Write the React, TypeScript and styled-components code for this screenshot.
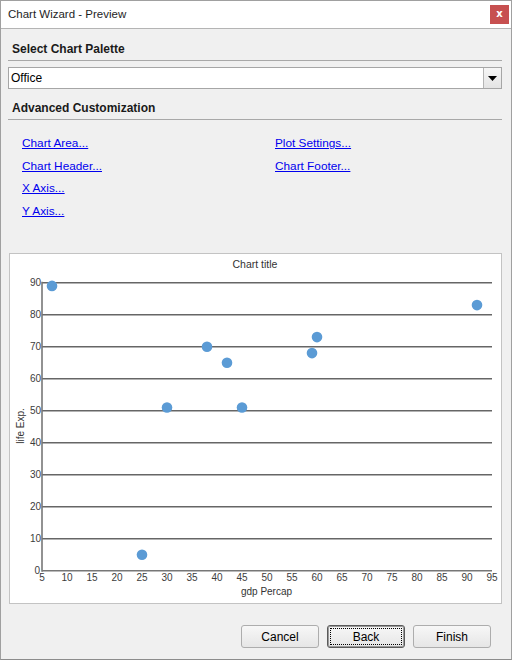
import React from 'react';
import styled, { createGlobalStyle } from 'styled-components';

const GlobalStyle = createGlobalStyle`
  html, body {
    margin: 0;
    padding: 0;
    background: #f0f0f0;
  }
  * {
    box-sizing: border-box;
  }
`;

const links: [string, string?][] = [
  ['Chart Area...', 'Plot Settings...'],
  ['Chart Header...', 'Chart Footer...'],
  ['X Axis...'],
  ['Y Axis...'],
];

const points = [
  { gdp: 7, life: 89 },
  { gdp: 25, life: 5 },
  { gdp: 30, life: 51 },
  { gdp: 38, life: 70 },
  { gdp: 42, life: 65 },
  { gdp: 45, life: 51 },
  { gdp: 59, life: 68 },
  { gdp: 60, life: 73 },
  { gdp: 92, life: 83 },
];

// plot coordinates, in page pixels
const plotLeft = 42;
const plotRight = 492;
const plotBottom = 570.7;
const xOf = (v: number) => plotLeft + (v - 5) * 5;
const yOf = (v: number) => plotBottom - v * 3.2;

const yTicks = [0, 10, 20, 30, 40, 50, 60, 70, 80, 90];
const xTicks = Array.from({ length: 19 }, (_, i) => 5 + i * 5);

const App: React.FC = () => {
  return (
    <>
      <GlobalStyle />
      <StyledWindow>
        <StyledTitleBar>
          <StyledTitle>Chart Wizard - Preview</StyledTitle>
          <StyledClose>x</StyledClose>
        </StyledTitleBar>
        <StyledBody>
          <StyledSectionHeader>Select Chart Palette</StyledSectionHeader>
          <StyledSelect>
            <StyledSelectValue>Office</StyledSelectValue>
            <StyledSelectArrow>
              <svg width="9" height="5" viewBox="0 0 9 5">
                <path d="M0 0 H9 L4.5 5 Z" fill="#000" />
              </svg>
            </StyledSelectArrow>
          </StyledSelect>
          <StyledSectionHeader $gap={12}>Advanced Customization</StyledSectionHeader>
          <StyledLinkGrid>
            {links.map(([a, b]) => (
              <React.Fragment key={a}>
                <StyledLink href="#">{a}</StyledLink>
                {b ? <StyledLink href="#">{b}</StyledLink> : <span />}
              </React.Fragment>
            ))}
          </StyledLinkGrid>
          <StyledChartPanel>
            <svg width="491" height="349" viewBox="10 254 491 349">
              <text x="255" y="268" textAnchor="middle" fontSize="10.5" fill="#333">
                Chart title
              </text>
              {yTicks.map((t) => (
                <React.Fragment key={t}>
                  {t > 0 && (
                    <line
                      x1={plotLeft}
                      x2={plotRight}
                      y1={yOf(t)}
                      y2={yOf(t)}
                      stroke="#666"
                      strokeWidth="1.6"
                    />
                  )}
                  <text
                    x={t === 0 ? 40 : 41}
                    y={yOf(t) + 3.5}
                    textAnchor="end"
                    fontSize="10"
                    fill="#3c3c3c"
                  >
                    {t}
                  </text>
                </React.Fragment>
              ))}
              <line x1={plotLeft} x2={plotLeft} y1={yOf(90) - 1} y2={plotBottom + 1} stroke="#777" strokeWidth="1.6" />
              <line x1={plotLeft} x2={plotRight} y1={plotBottom} y2={plotBottom} stroke="#777" strokeWidth="1.6" />
              {xTicks.map((t) => (
                <text key={t} x={xOf(t)} y="581" textAnchor="middle" fontSize="10" fill="#3c3c3c">
                  {t}
                </text>
              ))}
              <text x="266.5" y="595" textAnchor="middle" fontSize="10" fill="#333">
                gdp Percap
              </text>
              <text
                transform="translate(23.5 426) rotate(-90)"
                textAnchor="middle"
                fontSize="10"
                fill="#333"
              >
                life Exp.
              </text>
              {points.map((p) => (
                <circle key={`${p.gdp}-${p.life}`} cx={xOf(p.gdp)} cy={yOf(p.life)} r="5.3" fill="#5b9bd5" />
              ))}
            </svg>
          </StyledChartPanel>
          <StyledFooter>
            <StyledButton>Cancel</StyledButton>
            <StyledButton $primary>Back</StyledButton>
            <StyledButton>Finish</StyledButton>
          </StyledFooter>
        </StyledBody>
      </StyledWindow>
    </>
  );
};

const StyledWindow = styled.div`
  width: 512px;
  height: 660px;
  border: 1px solid #a0a0a0;
  border-bottom-color: #8c8c8c;
  background: #f0f0f0;
  display: flex;
  flex-direction: column;
  font-family: 'Liberation Sans', Arial, sans-serif;
  color: #000;
`;

const StyledTitleBar = styled.div`
  height: 28px;
  flex: none;
  background: #fff;
  border-bottom: 1px solid #b4b4b4;
  display: flex;
  align-items: center;
  justify-content: space-between;
  padding: 0 2px 1px 7px;
`;

const StyledTitle = styled.div`
  font-size: 11.5px;
  color: #1e1e1e;
`;

const StyledClose = styled.div`
  width: 19px;
  height: 19px;
  background: #c75050;
  color: #fff;
  font-family: 'DejaVu Sans', sans-serif;
  font-weight: bold;
  font-size: 10px;
  line-height: 17px;
  text-align: center;
`;

const StyledBody = styled.div`
  flex: 1;
  display: flex;
  flex-direction: column;
  padding: 0 9px 0 7px;
`;

const StyledSectionHeader = styled.div<{ $gap?: number }>`
  margin-top: ${(p) => p.$gap ?? 13}px;
  padding: 0 0 3px 4px;
  font-size: 12px;
  font-weight: bold;
  line-height: 15px;
  color: #1a1a1a;
  border-bottom: 1px solid #a8a8a8;
`;

const StyledSelect = styled.div`
  margin-top: 6px;
  height: 22px;
  display: flex;
  background: #fff;
  border: 1px solid #a6a6a6;
`;

const StyledSelectValue = styled.div`
  flex: 1;
  display: flex;
  align-items: center;
  padding-left: 2px;
  font-size: 12px;
`;

const StyledSelectArrow = styled.div`
  width: 18px;
  display: flex;
  align-items: center;
  justify-content: center;
  border-left: 1px solid #b5b5b5;
  background: linear-gradient(#f6f6f6, #e4e4e4);
  svg {
    margin-top: 1px;
  }
`;

const StyledLinkGrid = styled.div`
  display: grid;
  grid-template-columns: 253px 1fr;
  grid-auto-rows: 22.6px;
  padding: 16px 0 0 14px;
`;

const StyledLink = styled.a`
  font-size: 11.8px;
  line-height: 14px;
  color: #0000ee;
  text-decoration: underline;
  justify-self: start;
`;

const StyledChartPanel = styled.div`
  margin: 27px 0 0 1px;
  width: 493px;
  height: 351px;
  background: #fff;
  border: 1px solid #c3c3c3;
  svg {
    display: block;
    font-family: 'Liberation Sans', Arial, sans-serif;
  }
`;

const StyledFooter = styled.div`
  display: flex;
  justify-content: flex-end;
  gap: 8px;
  margin-top: 21px;
  padding-right: 11px;
`;

const StyledButton = styled.button<{ $primary?: boolean }>`
  width: 78px;
  height: 23px;
  padding: 0;
  font-family: 'Liberation Sans', Arial, sans-serif;
  font-size: 12px;
  color: #000;
  border-radius: 3px;
  border: 1px solid ${(p) => (p.$primary ? '#5a5a5a' : '#adadad')};
  box-shadow: ${(p) => (p.$primary ? 'inset 0 0 0 1px #9a9a9a' : 'none')};
  background: linear-gradient(#f7f7f7, #e6e6e6);
  position: relative;
  &::after {
    content: '';
    display: ${(p) => (p.$primary ? 'block' : 'none')};
    position: absolute;
    inset: 2px;
    border: 1px dotted #000;
  }
`;

export default App;
